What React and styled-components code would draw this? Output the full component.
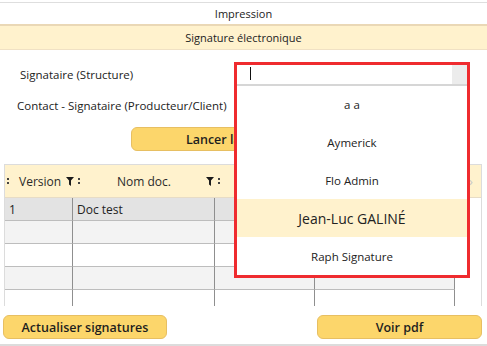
import React from "react";
import styled, {createGlobalStyle} from "styled-components";

const GlobalStyle = createGlobalStyle`
  body {
    margin: 0;
    background: #fff;
    font-family: "Open Sans", "Noto Sans", sans-serif;
    font-size: 11px;
    color: #222;
  }
`

const colors = {
    yellow: "#fff2cd",
    yellowLine: "#ead8b6",
    button: "#fcd66b",
    buttonBorder: "#e7bf62",
    grid: "#8f8f8f",
    red: "#ef2b2f",
}

const Page = styled.div`
  position: relative;
  width: 487px;
  height: 346px;
  overflow: hidden;
  padding-top: 2px;
  box-sizing: border-box;
  border-bottom: 2px solid #dcdcdc;
`

const TitleBar = styled.div`
  height: 22px;
  border-top: 1px solid #dedede;
  display: flex;
  align-items: center;
  justify-content: center;
  box-sizing: border-box;
`

const SectionBar = styled.div`
  height: 26px;
  background: ${colors.yellow};
  border-top: 2px solid ${colors.yellowLine};
  border-bottom: 1px solid #f0e1c4;
  display: flex;
  align-items: center;
  justify-content: center;
  box-sizing: border-box;
`

const Form = styled.div`
  display: flex;
  flex-direction: column;
  padding: 9px 0 0;
`

const FieldRow = styled.div`
  height: 31px;
  display: flex;
  align-items: center;
  font-size: 11.5px;
  padding-left: ${props => props.indent || 17}px;
`

const ButtonRow = styled.div`
  display: flex;
  justify-content: ${props => props.justify || "center"};
  padding: ${props => props.pad || "6px 0 0"};
`

const Button = styled.button`
  width: ${props => props.w}px;
  height: 24px;
  background: ${colors.button};
  border: 1px solid ${colors.buttonBorder};
  border-radius: 6px;
  font-family: inherit;
  font-size: 12.5px;
  font-weight: 600;
  color: #1e1e1e;
  padding: 0;
`

const Table = styled.div`
  margin: 13px 5px 0 4px;
  border: 1px solid #dcdcdc;
  border-bottom: none;
  height: 141px;
  overflow: hidden;
`

const HeadRow = styled.div`
  display: grid;
  grid-template-columns: 68px 142px 100px 140px 1fr;
  height: 32px;
  background: ${colors.yellow};
  border-bottom: 1px solid #e7dcc6;
`

const HeadCell = styled.div`
  display: flex;
  align-items: center;
  justify-content: ${props => props.justify || "flex-start"};
  padding: 0 0 0 2px;
  font-size: 12px;
  color: #2a2a2a;
  white-space: nowrap;
  overflow: visible;
  min-width: 0;
`

const Label = styled.span`
  margin: 0 ${props => props.after || 0}px 0 ${props => props.before || 0}px;
  flex-shrink: 0;
`

const Grip = styled.span`
  display: flex;
  flex-direction: column;
  gap: 2px;
  flex-shrink: 0;
  margin-left: ${props => props.before || 0}px;
  &:before, &:after {
    content: "";
    width: 2px;
    height: 2px;
    background: #444;
  }
`

const FunnelIcon = styled.svg`
  flex-shrink: 0;
  display: block;
`

const Funnel = () => (
    <FunnelIcon width="8" height="9" viewBox="0 0 9 10">
        <path d="M0 0h9L5.6 4V10L3.4 8.4V4z" fill="#1a1a1a"/>
    </FunnelIcon>
)

const BodyRow = styled.div`
  display: grid;
  grid-template-columns: 68px 142px 100px 140px 1fr;
  height: 23px;
  background: ${props => props.bg};
`

const Cell = styled.div`
  border-right: ${props => props.last ? "none" : `1px solid ${colors.grid}`};
  border-bottom: ${props => props.last ? "none" : `1px solid #bdbdbd`};
  display: flex;
  align-items: center;
  padding-left: 4px;
  font-size: 12px;
  background: ${props => props.last ? "#fff" : "transparent"};
`

const Arrow = styled.span`
  color: #c8c8c8;
  font-size: 13px;
  padding-left: 14px;
  display: flex;
  align-items: center;
`

const Dropdown = styled.div`
  position: absolute;
  left: 234px;
  top: 62px;
  width: 236px;
  height: 216px;
  border: 3px solid ${colors.red};
  box-sizing: border-box;
  background: #fff;
  display: flex;
  flex-direction: column;
`

const SearchBox = styled.div`
  height: 19px;
  display: flex;
  border-bottom: 2px solid #d6d6d6;
  box-sizing: content-box;
`

const SearchInput = styled.div`
  flex: 1;
  position: relative;
  &:after {
    content: "";
    position: absolute;
    left: 13px;
    top: 2px;
    width: 1px;
    height: 13px;
    background: #111;
  }
`

const SearchBtn = styled.div`
  width: 15px;
  background: #ececec;
`

const Option = styled.div`
  height: 38px;
  display: flex;
  align-items: center;
  justify-content: center;
  font-size: ${props => props.active ? 14 : 11.5}px;
  background: ${props => props.active ? colors.yellow : "#fff"};
  color: #222;
`

const rowColors = ["#e3e3e3", "#f3f3f3", "#fff", "#f3f3f3", "#fff"]
const contacts = ["a a", "Aymerick", "Flo Admin", "Jean-Luc GALINÉ", "Raph Signature"]

export default function App() {
    return (
        <>
            <GlobalStyle/>
            <Page>
                <TitleBar>Impression</TitleBar>
                <SectionBar>Signature électronique</SectionBar>
                <Form>
                    <FieldRow indent={20}>Signataire (Structure)</FieldRow>
                    <FieldRow indent={17}>Contact - Signataire (Producteur/Client)</FieldRow>
                    <ButtonRow>
                        <Button w={226}>Lancer la signature</Button>
                    </ButtonRow>
                </Form>
                <Table>
                    <HeadRow>
                        <HeadCell>
                            <Grip/>
                            <Label before={10} after={5}>Version</Label>
                            <Funnel/>
                            <Grip before={4}/>
                        </HeadCell>
                        <HeadCell>
                            <Label before={42} after={35}>Nom doc.</Label>
                            <Funnel/>
                            <Grip before={4}/>
                        </HeadCell>
                        <HeadCell/>
                        <HeadCell/>
                        <Arrow>›</Arrow>
                    </HeadRow>
                    {rowColors.map((bg, i) => (
                        <BodyRow key={i} bg={bg}>
                            <Cell>{i === 0 ? "1" : ""}</Cell>
                            <Cell>{i === 0 ? "Doc test" : ""}</Cell>
                            <Cell/>
                            <Cell/>
                            <Cell last/>
                        </BodyRow>
                    ))}
                </Table>
                <ButtonRow justify="space-between" pad="9px 5px 0 3px">
                    <Button w={164}>Actualiser signatures</Button>
                    <Button w={165}>Voir pdf</Button>
                </ButtonRow>
                <Dropdown>
                    <SearchBox>
                        <SearchInput/>
                        <SearchBtn/>
                    </SearchBox>
                    {contacts.map((c, i) => (
                        <Option key={c} active={i === 3}>{c}</Option>
                    ))}
                </Dropdown>
            </Page>
        </>
    );
}
